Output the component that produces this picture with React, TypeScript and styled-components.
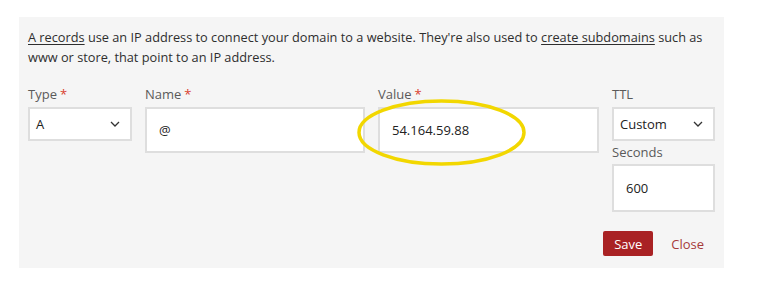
import styled, { createGlobalStyle } from "styled-components";

const GlobalStyle = createGlobalStyle`
  html, body {
    margin: 0;
    padding: 0;
    background: #ffffff;
  }
  body {
    font-family: "Open Sans", "Liberation Sans", sans-serif;
    color: #333333;
  }
`;

const Panel = styled.div`
  margin: 17px 0 0 19px;
  width: 705px;
  height: 251px;
  box-sizing: border-box;
  background: #f5f5f5;
  padding: 10px 9px 12px;
`;

const Intro = styled.p`
  margin: 0 0 17px;
  font-size: 12.75px;
  line-height: 20px;
  color: #2e2e2e;
`;

const Link = styled.a`
  color: #2e2e2e;
  text-decoration: underline;
  text-underline-offset: 2px;
`;

const FieldRow = styled.div`
  display: grid;
  grid-template-columns: 104px 220px 221px 103px;
  column-gap: 13px;
  align-items: start;
`;

const Field = styled.div`
  position: relative;
  display: flex;
  flex-direction: column;
`;

const Label = styled.label<{ $sub?: boolean }>`
  font-size: 13px;
  line-height: 20px;
  color: #5a5a5a;
  margin-top: ${(p) => (p.$sub ? "1px" : "0")};
  margin-bottom: ${(p) => (p.$sub ? "2px" : "3px")};
`;

const Star = styled.span`
  color: #d9412e;
  margin-left: 3px;
`;

const Select = styled.div`
  height: 34px;
  box-sizing: border-box;
  background: #fff;
  border: 2px solid #dedede;
  display: flex;
  align-items: center;
  justify-content: space-between;
  padding: 0 10px 0 6px;
  font-size: 13px;
  color: #222;
`;

const Input = styled.div<{ $h: number }>`
  height: ${(p) => p.$h}px;
  box-sizing: border-box;
  background: #fff;
  border: 2px solid #dedede;
  display: flex;
  align-items: center;
  padding: 0 12px;
  font-size: 13px;
  color: #222;
`;

const Circle = styled.svg`
  position: absolute;
  left: -21px;
  top: 15px;
  pointer-events: none;
`;

const Actions = styled.div`
  display: flex;
  justify-content: flex-end;
  align-items: center;
  gap: 7px;
  margin-top: 19px;
`;

const SaveButton = styled.button`
  width: 50px;
  height: 25px;
  border: none;
  border-radius: 2px;
  background: #a92224;
  color: #fff;
  font-family: inherit;
  font-size: 13px;
  padding: 0;
`;

const CloseButton = styled.button`
  border: none;
  background: none;
  color: #a63a3a;
  font-family: inherit;
  font-size: 13px;
  padding: 0 11px;
`;

const Chevron = () => (
  <svg width="10" height="6" viewBox="0 0 10 6" fill="none">
    <path d="M1 1l4 4 4-4" stroke="#333" strokeWidth="1.3" />
  </svg>
);

export default function App() {
  return (
    <>
      <GlobalStyle />
      <Panel>
        <Intro>
          <Link>A records</Link> use an IP address to connect your domain to a website.
          They're also used to <Link>create subdomains</Link> such as www or store, that
          point to an IP address.
        </Intro>
        <FieldRow>
          <Field>
            <Label>
              Type<Star>*</Star>
            </Label>
            <Select>
              A <Chevron />
            </Select>
          </Field>
          <Field>
            <Label>
              Name<Star>*</Star>
            </Label>
            <Input $h={46}>@</Input>
          </Field>
          <Field>
            <Label>
              Value<Star>*</Star>
            </Label>
            <Input $h={46}>54.164.59.88</Input>
            <Circle width="169" height="67" viewBox="0 0 169 67">
              <ellipse cx="84.5" cy="33.5" rx="82.5" ry="31.5" fill="none" stroke="#f2d700" strokeWidth="3.5" />
            </Circle>
          </Field>
          <Field>
            <Label>TTL</Label>
            <Select>
              Custom <Chevron />
            </Select>
            <Label $sub>Seconds</Label>
            <Input $h={48}>600</Input>
          </Field>
        </FieldRow>
        <Actions>
          <SaveButton>Save</SaveButton>
          <CloseButton>Close</CloseButton>
        </Actions>
      </Panel>
    </>
  );
}
